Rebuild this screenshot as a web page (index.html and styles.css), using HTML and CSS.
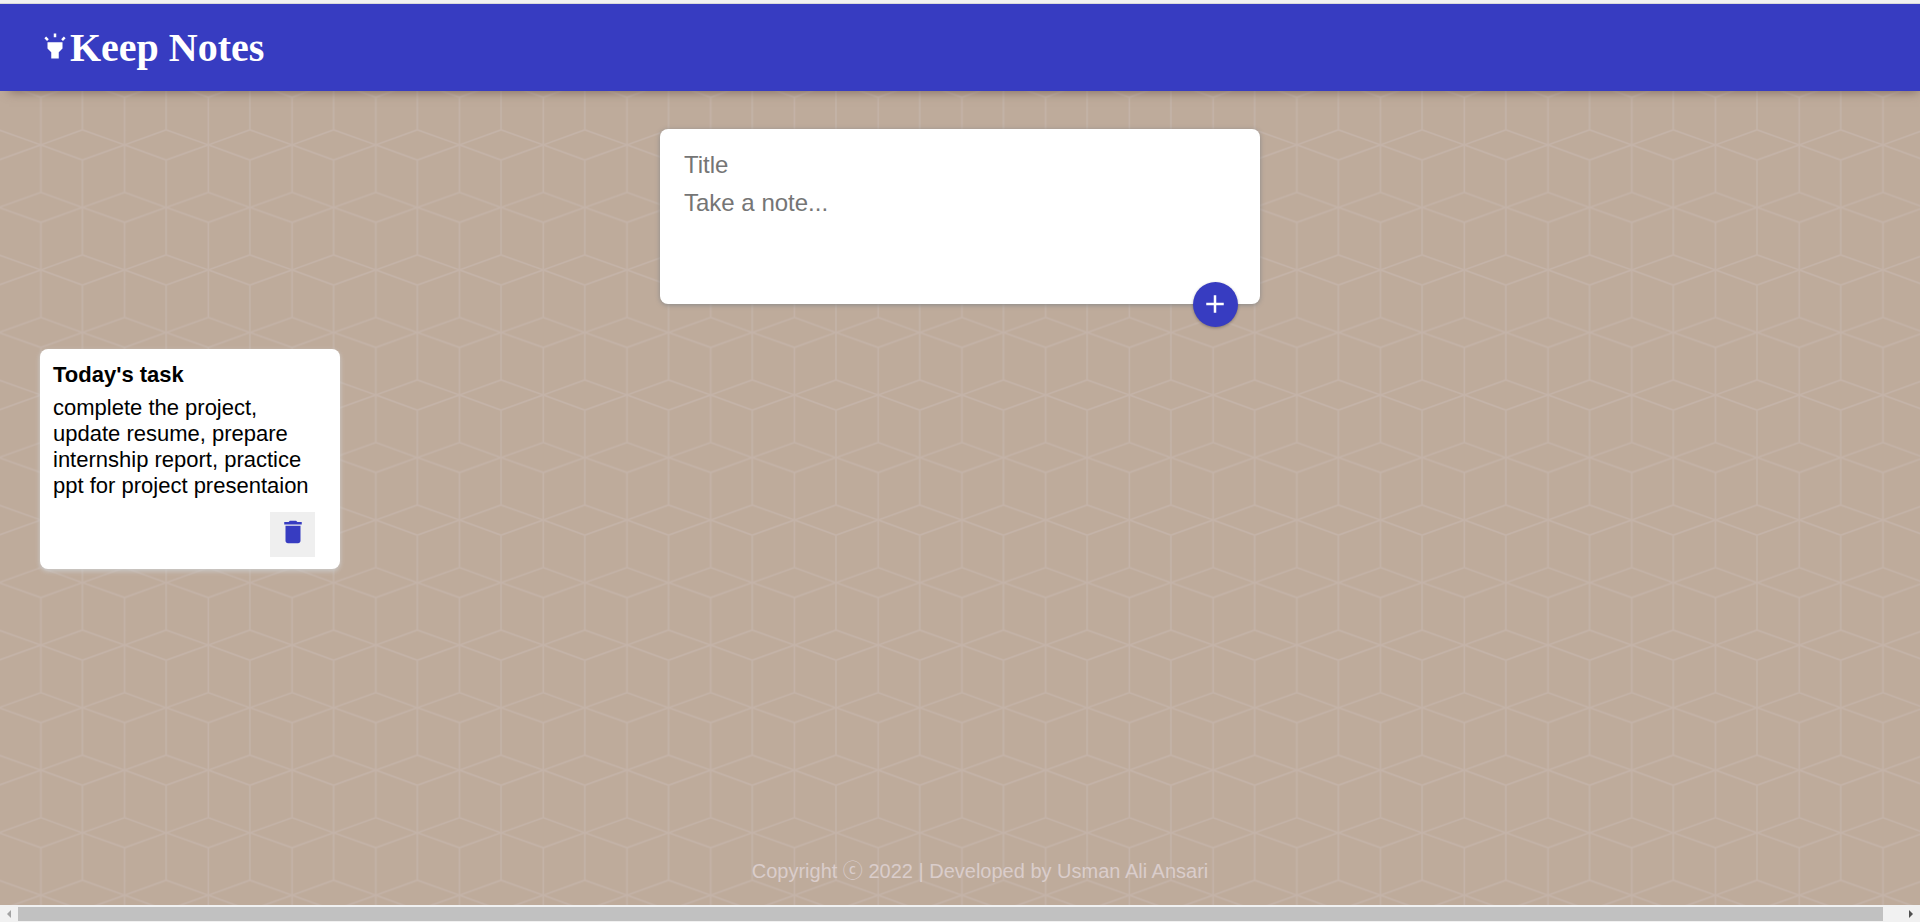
FILE: index.html
```html
<!DOCTYPE html>
<html lang="en">
<head>
  <meta charset="utf-8">
  <title>Keep Notes</title>
  <link rel="stylesheet" href="styles.css">
</head>
<body>
  <svg class="backdrop" aria-hidden="true">
    <defs>
      <pattern id="cubes" width="83.73" height="125.06" patternUnits="userSpaceOnUse" x="-1.3" y="82.4">
        <path class="cube-line" d="M42.2 15V110M0 0L42.2 15L83.73 0M0 0V47.5M83.73 0V47.5M0 47.5L42.2 62.5L83.73 47.5M0 77.6L42.2 62.5L83.73 77.6M0 77.6V125.06M83.73 77.6V125.06M0 125.06L42.2 110L83.73 125.06"/>
      </pattern>
    </defs>
    <rect width="100%" height="100%" fill="url(#cubes)"/>
  </svg>

  <header class="header">
    <svg class="icon" viewBox="0 0 24 24" aria-hidden="true"><path d="M6 14l3 3v5h6v-5l3-3V9H6zm5-12h2v3h-2zM3.5 5.875L4.914 4.46l2.12 2.122L5.62 7.997zm13.46.71l2.123-2.12 1.414 1.414L18.375 8z"/></svg>
    <h1 class="brand">Keep Notes</h1>
  </header>

  <main class="content">
    <form class="composer">
      <input class="field" type="text" name="title" placeholder="Title" aria-label="Title">
      <textarea class="field" name="note" rows="3" placeholder="Take a note..." aria-label="Take a note"></textarea>
      <button class="add" type="button" aria-label="Add note">
        <svg class="icon" viewBox="0 0 24 24" aria-hidden="true"><path d="M19 13h-6v6h-2v-6H5v-2h6V5h2v6h6v2z"/></svg>
      </button>
    </form>

    <section class="notes">
      <article class="note">
        <h2 class="note-title">Today's task</h2>
        <p class="note-text">complete the project, update resume, prepare internship report, practice ppt for project presentaion</p>
        <button class="delete" type="button" aria-label="Delete note">
          <svg class="icon" viewBox="0 0 24 24" aria-hidden="true"><path d="M6 19c0 1.1.9 2 2 2h8c1.1 0 2-.9 2-2V7H6v12zM19 4h-3.5l-1-1h-5l-1 1H5v2h14V4z"/></svg>
        </button>
      </article>
    </section>
  </main>

  <footer class="footer">Copyright ⓒ 2022 | Developed by Usman Ali Ansari</footer>

  <div class="scrollbar" aria-hidden="true">
    <svg class="arrow" viewBox="0 0 18 17"><path fill="#a3a3a3" d="M11 5v8L7 9z"/></svg>
    <div class="track"><div class="thumb"></div></div>
    <svg class="arrow" viewBox="0 0 18 17"><path fill="#505050" d="M7 5v8l4-4z"/></svg>
  </div>
</body>
</html>
```
FILE: styles.css
```css
* {
  box-sizing: border-box;
  margin: 0;
  padding: 0;
}

body {
  position: relative;
  display: flex;
  flex-direction: column;
  min-height: 100vh;
  background: #beab9b;
  font-family: "Liberation Sans", Arial, sans-serif;
}

.backdrop {
  position: absolute;
  inset: 0;
  z-index: -1;
  width: 100%;
  height: 100%;
}

.cube-line {
  fill: none;
  stroke: #c4b3a8;
  stroke-width: 1.6;
}

.icon {
  flex: none;
  width: 30px;
  height: 30px;
  fill: currentColor;
}

.header {
  display: flex;
  align-items: center;
  padding: 21px 40px 19px;
  border-top: 3px solid #f1f1f1;
  background: #373cc1;
  box-shadow: 4px 6px 10px -5px rgba(90, 70, 60, 0.6);
  color: #fff;
}

.header::before {
  content: "";
  position: absolute;
  inset: 3px 0 auto;
  height: 1px;
  background: #d9d9d9;
}

.header .icon {
  margin-bottom: 4px;
}

.brand {
  font: bold 40px/48px "Liberation Serif", "Times New Roman", serif;
}

.content {
  flex: 1;
  padding: 38px 40px;
}

.composer {
  position: relative;
  display: flex;
  flex-direction: column;
  gap: 10px;
  max-width: 600px;
  margin: 0 auto;
  padding: 22px 24px 31px;
  border-radius: 8px;
  background: #fff;
  box-shadow: 0 1px 5px #8a8989;
}

.field {
  width: 100%;
  border: 0;
  outline: 0;
  resize: none;
  background: none;
  font: 24px/28px "Liberation Sans", Arial, sans-serif;
}

.field::placeholder {
  color: #757575;
}

.add {
  position: absolute;
  right: 22px;
  bottom: -23px;
  display: flex;
  align-items: center;
  justify-content: center;
  width: 45px;
  height: 45px;
  padding: 0 2px 2px 0;
  border: 0;
  border-radius: 50%;
  background: #373cc1;
  box-shadow: 0 1px 3px rgba(0, 0, 0, 0.3);
  color: #fff;
}

.notes {
  display: flex;
  flex-wrap: wrap;
  gap: 16px;
  margin-top: 45px;
}

.note {
  display: flex;
  flex-direction: column;
  width: 300px;
  padding: 13px 12px 12px 13px;
  border-radius: 8px;
  background: #fff;
  box-shadow: 0 2px 5px #ccc;
  color: #000;
}

.note-title {
  margin-bottom: 7px;
  font-size: 22px;
  line-height: 26px;
}

.note-text {
  margin-bottom: 13px;
  font-size: 22px;
  line-height: 26px;
}

.delete {
  display: flex;
  align-items: flex-start;
  justify-content: center;
  align-self: flex-end;
  width: 45px;
  height: 45px;
  margin-right: 13px;
  padding-top: 5px;
  border: 0;
  background: #efefef;
  color: #373cc1;
}

.footer {
  padding: 0 0 22px 40px;
  color: #dacdcb;
  font-family: "Liberation Sans", "Noto Sans CJK JP", sans-serif;
  font-size: 20px;
  line-height: 23px;
  text-align: center;
}

.scrollbar {
  display: flex;
  height: 17px;
  background: #f1f1f1;
}

.arrow {
  flex: none;
  width: 18px;
  height: 17px;
}

.track {
  flex: 1;
  padding: 2px 0 1px;
}

.thumb {
  width: 99%;
  height: 14px;
  background: #c1c1c1;
}
```
